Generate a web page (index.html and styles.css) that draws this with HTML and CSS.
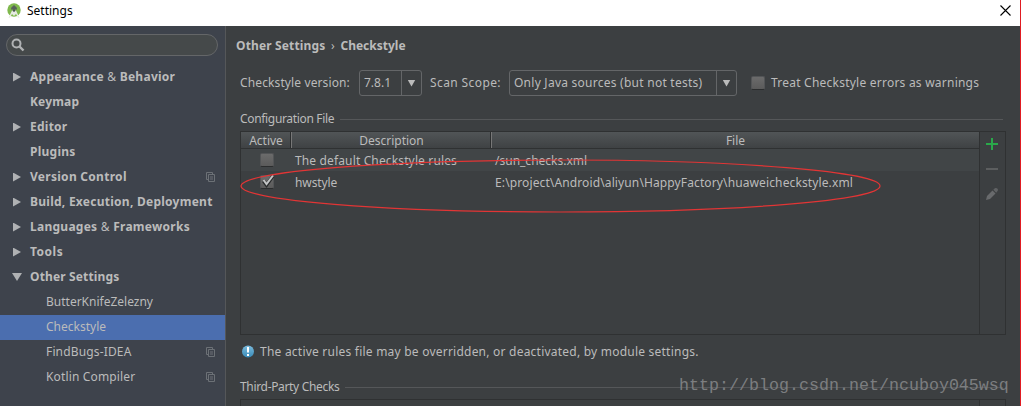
FILE: index.html
```html
<!DOCTYPE html>
<html lang="en">
<head>
<meta charset="utf-8">
<title>Settings</title>
<link rel="stylesheet" href="styles.css">
</head>
<body>
<svg width="0" height="0" class="defs">
  <symbol id="copy" viewBox="0 0 10 10"><path d="M2 7.5H.5V.5h6V2M2.500 2.500h6v7h-6zM4 5h3M4 7h3" fill="none" stroke="#6c7176"/></symbol>
</svg>
<div class="window">
  <header class="titlebar">
    <svg class="logo" width="16" height="16" viewBox="0 0 16 16"><circle cx="7" cy="7" r="6.700" fill="#7fb84c"/><path d="M4 6.500a3 3.500 0 0 1 6 0z" fill="#56605a"/><path d="M6.500 2h1v3h-1z" fill="#56605a"/><path d="M1.500 15 5 7.500h4L12.500 15 11 14.500 9 11 7 13l-2-2-2 3.500z" fill="#e6ebe2"/><circle cx="7" cy="7.500" r="1.300" fill="#4c5551"/></svg>
    <span class="title">Settings</span>
    <svg class="close" width="11" height="11" viewBox="0 0 11 11"><path d="M.5.5l10 10M10.500.5l-10 10" stroke="#000" stroke-width="1.100"/></svg>
  </header>
  <div class="body">
    <nav class="sidebar">
      <div class="search"><svg width="14" height="14" viewBox="0 0 14 14"><circle cx="5.500" cy="5.500" r="4" fill="none" stroke="#b0b2b4" stroke-width="2"/><path d="M8.500 8.500l4 4" stroke="#b0b2b4" stroke-width="2.400"/></svg></div>
      <ul class="tree">
        <li class="group"><i class="arrow"></i><span class="t1">Appearance <span class="amp">&amp;</span> Behavior</span></li>
        <li class="group"><span class="t2">Keymap</span></li>
        <li class="group"><i class="arrow"></i><span class="t3">Editor</span></li>
        <li class="group"><span class="t4">Plugins</span></li>
        <li class="group"><i class="arrow"></i><span class="t5">Version Control</span><svg class="copy"><use href="#copy"/></svg></li>
        <li class="group"><i class="arrow"></i><span class="t6">Build, Execution, Deployment</span></li>
        <li class="group"><i class="arrow"></i><span class="t7">Languages <span class="amp">&amp;</span> Frameworks</span></li>
        <li class="group"><i class="arrow"></i><span class="t8">Tools</span></li>
        <li class="group"><i class="arrow open"></i><span class="t9">Other Settings</span></li>
        <li class="leaf"><span class="t10">ButterKnifeZelezny</span></li>
        <li class="leaf selected"><span class="t11">Checkstyle</span></li>
        <li class="leaf"><span class="t12">FindBugs-IDEA</span><svg class="copy"><use href="#copy"/></svg></li>
        <li class="leaf"><span class="t13">Kotlin Compiler</span><svg class="copy"><use href="#copy"/></svg></li>
      </ul>
    </nav>
    <main class="content">
      <h1 class="crumbs"><span class="t9">Other Settings</span><span class="chevron">›</span><span class="c2">Checkstyle</span></h1>
      <div class="options">
        <span class="o1">Checkstyle version:</span>
        <div class="combo version"><span class="o2">7.8.1</span><b></b></div>
        <span class="o3">Scan Scope:</span>
        <div class="combo scope"><span class="o4">Only Java sources (but not tests)</span><b></b></div>
        <i class="check"></i>
        <span class="o5">Treat Checkstyle errors as warnings</span>
      </div>
      <div class="section"><span class="s1">Configuration File</span><hr></div>
      <div class="panel">
        <div class="table">
          <div class="row head"><span class="h1">Active</span><span class="h2">Description</span><span class="h3">File</span></div>
          <div class="row alt"><div><i class="check"></i></div><span class="r1">The default Checkstyle rules</span><span class="r2">/sun_checks.xml</span></div>
          <div class="row"><div><i class="check"><svg width="16" height="16" viewBox="0 0 16 16"><path d="M3.500 7 6.500 11 13 2" fill="none" stroke="#292b2c" stroke-width="3.500"/><path d="M3.500 6 6.500 10 13 1.500" fill="none" stroke="#c3c5c6" stroke-width="2"/></svg></i></div><span class="r3">hwstyle</span><span class="r4">E:\project\Android\aliyun\HappyFactory\huaweicheckstyle.xml</span></div>
        </div>
        <div class="tools">
          <svg width="14" height="14" viewBox="0 0 14 14"><path d="M1 7h12M7 1v12" stroke="#2aa84a" stroke-width="2"/></svg>
          <svg width="14" height="14" viewBox="0 0 14 14"><path d="M1 7h12" stroke="#5c5e5f" stroke-width="2"/></svg>
          <svg width="14" height="14" viewBox="0 0 14 14"><path d="M1 13 2 9l5.500-5.500 3 3L5 12z" fill="#686a6c"/><path d="m8.300 2.700 1.500-1.500q1.700-.7 3 .8.500 1.300-.4 2.200l-1.200 1.500z" fill="#606264"/></svg>
        </div>
      </div>
      <div class="info"><svg width="13" height="13" viewBox="0 0 13 13"><defs><linearGradient id="blue" x2="0" y2="1"><stop stop-color="#7cbbdd"/><stop offset="1" stop-color="#388bb8"/></linearGradient></defs><circle cx="6" cy="6.500" r="6" fill="url(#blue)"/><path d="M5 2h2v5.500H5zM5 9h2v2H5z" fill="#fff"/></svg><span class="n1">The active rules file may be overridden, or deactivated, by module settings.</span></div>
      <div class="section third"><span class="s2">Third-Party Checks</span><hr></div>
      <div class="panel second"><div class="table"></div><div class="tools"></div></div>
    </main>
  </div>
  <svg class="annotation" width="642" height="56" viewBox="0 0 642 56"><ellipse cx="320.500" cy="28" rx="319.500" ry="26" fill="none" stroke="#e23535" stroke-width="1.200"/></svg>
  <div class="watermark">http://blog.csdn.net/ncuboy045wsq</div>
</div>
</body>
</html>
```
FILE: styles.css
```css
* { box-sizing: border-box; }
body { margin: 0; background: #3c3f41; font: 12px/16px "Noto Sans", sans-serif; color: #bbb; }
.defs { position: absolute; }
.window { position: relative; width: 1021px; height: 406px; overflow: hidden; border-right: 1px solid #e01b22; display: flex; flex-direction: column; white-space: nowrap; }
.titlebar { height: 26px; flex: none; background: #fff; color: #000; display: flex; align-items: center; padding: 0 9px 5px 7px; }
.logo { margin-top: 1px; }
.title { margin-left: 4px; }
.close { margin-left: auto; }
.body { flex: 1; display: flex; min-height: 0; }
.sidebar { width: 226px; background: #3e434c; border-right: 1px solid #555759; padding-top: 8px; flex: none; }
.search { width: 212px; height: 22px; margin-left: 6px; border: 1px solid #646668; border-radius: 11px; background: #45494a; padding: 3px 4px; }
.search svg { display: block; }
.tree { list-style: none; margin: 9px 0 0; padding: 0; }
.tree li { height: 25px; display: flex; align-items: center; padding: 0 9px 2px 46px; }
.tree .group { padding-left: 30px; font-weight: 700; }
.tree .selected { background: #4b6eaf; }
.amp { font-weight: 400; }
.arrow { width: 8px; height: 9px; margin: 1px 9px 0 -17px; background: #afb1b3; clip-path: polygon(0 0, 100% 50%, 0 100%); }
.arrow.open { width: 10px; height: 8px; margin: 1px 8px 0 -18px; clip-path: polygon(0 0, 100% 0, 50% 100%); }
.copy { width: 10px; height: 10px; margin: 0 0 0 auto; }
.t1 { letter-spacing: .26px; }
.t2 { letter-spacing: .15px; }
.t3, .t4 { letter-spacing: .25px; }
.t5 { letter-spacing: .28px; }
.t6 { letter-spacing: .26px; }
.t7 { letter-spacing: .26px; }
.t8 { letter-spacing: .5px; }
.t9, .t12, .t13 { letter-spacing: .15px; }
.content { flex: 1; min-width: 0; display: flex; flex-direction: column; padding: 12px 14px 0 14px; }
.crumbs { margin: 0 0 0 -4px; font-size: 12px; line-height: 16px; height: 16px; display: flex; }
.chevron { width: 15px; text-align: center; font-weight: 400; }
.options { height: 26px; margin-top: 16px; display: flex; align-items: center; }
.o1 { width: 119px; letter-spacing: .12px; }
.o3 { width: 79px; letter-spacing: .4px; }
.o4 { letter-spacing: .25px; }
.o5 { letter-spacing: .23px; }
.combo { height: 26px; border: 1px solid #646668; border-radius: 3px; display: flex; align-items: center; padding-left: 4px; }
.combo b { margin-left: auto; width: 20px; height: 24px; border-left: 1px solid #646668; display: flex; align-items: center; justify-content: center; }
.combo b::after { content: ""; width: 8px; height: 7px; background: #bbb; clip-path: polygon(0 0, 100% 0, 50% 100%); }
.version { width: 63px; margin-right: 8px; }
.scope { width: 228px; margin-right: 14px; }
.check { flex: none; width: 14px; height: 14px; border: 1px solid #535557; border-bottom-color: #2b2d2e; border-radius: 2px; background: linear-gradient(#6b6b6b, #5b5b5b); display: block; }
.check svg { display: block; margin: -2px 0 0 -1px; }
.options .check { margin-right: 6px; }
.section { display: flex; align-items: center; height: 16px; margin-top: 15px; }
.section hr { flex: 1; border: 0; height: 1px; margin: 0 3px 0 6px; background: #555759; }
.s1, .s2 { letter-spacing: -.33px; }
.panel { height: 204px; margin: 4px 0 0; border: 1px solid #2f3132; display: flex; flex: none; }
.table { flex: 1; }
.tools { width: 26px; border-left: 1px solid #2f3132; display: flex; flex-direction: column; align-items: center; gap: 11px; padding: 5px 1px 0 0; }
.row { height: 22px; display: grid; grid-template-columns: 50px 200px 1fr; align-items: center; }
.row > span { padding: 2px 0 0 4px; }
.row div { display: flex; justify-content: center; }
.row .check { margin-left: 1px; }
.r1 { letter-spacing: .14px; }
.r3 { letter-spacing: -.1px; }
.r4 { letter-spacing: .12px; }
.alt { background: #414547; }
.head { height: 17px; background: linear-gradient(#515557, #3f4244); border-bottom: 1px solid #2f3132; text-align: center; }
.head > span { padding: 0; height: 16px; line-height: 18px; border-left: 1px solid #777; box-shadow: -1px 0 #2c2e2f; }
.head .h1 { border: 0; box-shadow: none; }
.info { display: flex; align-items: center; height: 16px; margin: 9px 0 0 2px; gap: 5px; }
.info svg { margin-top: -1px; }
.n1 { letter-spacing: .225px; }
.third { margin-top: 19px; }
.second { height: 40px; }
.annotation { position: absolute; left: 240px; top: 158px; }
.watermark { position: absolute; left: 679px; top: 376px; font: 16.67px/20px "Liberation Mono", monospace; color: #7c7e80; }
```
